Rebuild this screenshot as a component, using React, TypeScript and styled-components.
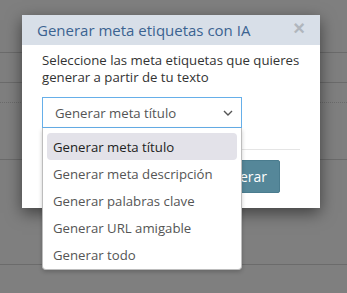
import React, { useState } from 'react';
import styled, { createGlobalStyle } from 'styled-components';

const GlobalStyle = createGlobalStyle`
  html, body {
    margin: 0;
    padding: 0;
    background: #ffffff;
    font-family: 'Open Sans', 'Liberation Sans', sans-serif;
  }
  * {
    box-sizing: border-box;
  }
`;

const Page = styled.div`
  position: relative;
  width: 347px;
  height: 293px;
  overflow: hidden;
  background: #ffffff;
`;

const BackRow = styled.div<{ $h: number; $dotted?: boolean }>`
  height: ${(p) => p.$h}px;
  border-bottom: 1px ${(p) => (p.$dotted ? 'dotted' : 'solid')} #d6d6d6;
`;

const Backdrop = styled.div`
  position: absolute;
  inset: 0;
  background: rgba(0, 0, 0, 0.5);
`;

const Modal = styled.div`
  position: absolute;
  left: 22px;
  top: 15px;
  width: 298px;
  background: #ffffff;
  box-shadow: 0 5px 15px rgba(0, 0, 0, 0.5);
`;

const Header = styled.div`
  height: 30px;
  display: flex;
  align-items: center;
  justify-content: space-between;
  padding: 0 15px;
  background: #d8dfe8;
`;

const Title = styled.h4`
  margin: 0;
  font-size: 15px;
  font-weight: 400;
  color: #3b6391;
`;

const Close = styled.button`
  border: 0;
  background: none;
  padding: 0;
  font-size: 20px;
  line-height: 1;
  color: #b0b6bd;
  font-family: 'Liberation Sans', sans-serif;
  font-weight: 700;
  cursor: pointer;
  margin-top: -4px;
`;

const Body = styled.div`
  padding: 7px 20px 21px;
`;

const Lead = styled.p`
  margin: 0 0 11px;
  font-size: 13.2px;
  line-height: 17px;
  color: #333333;
`;

const SelectWrap = styled.div`
  position: relative;
  width: 200px;
`;

const SelectBox = styled.div`
  height: 31px;
  display: flex;
  align-items: center;
  justify-content: space-between;
  padding: 0 8px 0 12px;
  border: 1px solid #66afe9;
  font-size: 13.2px;
  color: #555555;
  background: #ffffff;
`;

const Menu = styled.ul`
  position: absolute;
  left: 0;
  top: 31px;
  width: 200px;
  margin: 0;
  padding: 5px 4px 1px;
  list-style: none;
  background: #ffffff;
  border: 1px solid #bdbdbd;
  border-top: 0;
  border-radius: 0 0 4px 4px;
  box-shadow: 0 2px 4px rgba(0, 0, 0, 0.2);
  z-index: 2;
`;

const Option = styled.li<{ $active?: boolean }>`
  height: 27px;
  display: flex;
  align-items: center;
  padding-left: 6px;
  font-size: 13.2px;
  border-radius: 4px;
  color: ${(p) => (p.$active ? '#222222' : '#555555')};
  background: ${(p) => (p.$active ? '#e3e2e9' : 'transparent')};
`;

const Footer = styled.div`
  margin: 0 20px;
  padding: 10px 20px 15px 0;
  border-top: 1px solid #e5e5e5;
  display: flex;
  justify-content: flex-end;
`;

const Button = styled.button`
  height: 33px;
  padding: 0 12px;
  border: 1px solid #4a7c8e;
  border-radius: 2px;
  background: #558799;
  color: #ffffff;
  font-family: 'Open Sans', sans-serif;
  font-size: 14px;
`;

const Chevron = () => (
  <svg width="10" height="6" viewBox="0 0 10 6" fill="none">
    <path d="M1 1l4 4 4-4" stroke="#555" strokeWidth="1.4" />
  </svg>
);

const options = [
  'Generar meta título',
  'Generar meta descripción',
  'Generar palabras clave',
  'Generar URL amigable',
  'Generar todo',
];

export default function App() {
  const [selected] = useState(0);
  return (
    <Page>
      <GlobalStyle />
      <BackRow $h={53} />
      <BackRow $h={30} />
      <BackRow $h={20} $dotted />
      <BackRow $h={57} />
      <BackRow $h={105} />
      <Backdrop />
      <Modal>
        <Header>
          <Title>Generar meta etiquetas con IA</Title>
          <Close>×</Close>
        </Header>
        <Body>
          <Lead>Seleccione las meta etiquetas que quieres generar a partir de tu texto</Lead>
          <SelectWrap>
            <SelectBox>
              <span>{options[selected]}</span>
              <Chevron />
            </SelectBox>
            <Menu>
              {options.map((o, i) => (
                <Option key={o} $active={i === selected}>
                  {o}
                </Option>
              ))}
            </Menu>
          </SelectWrap>
        </Body>
        <Footer>
          <Button>Generar</Button>
        </Footer>
      </Modal>
    </Page>
  );
}
